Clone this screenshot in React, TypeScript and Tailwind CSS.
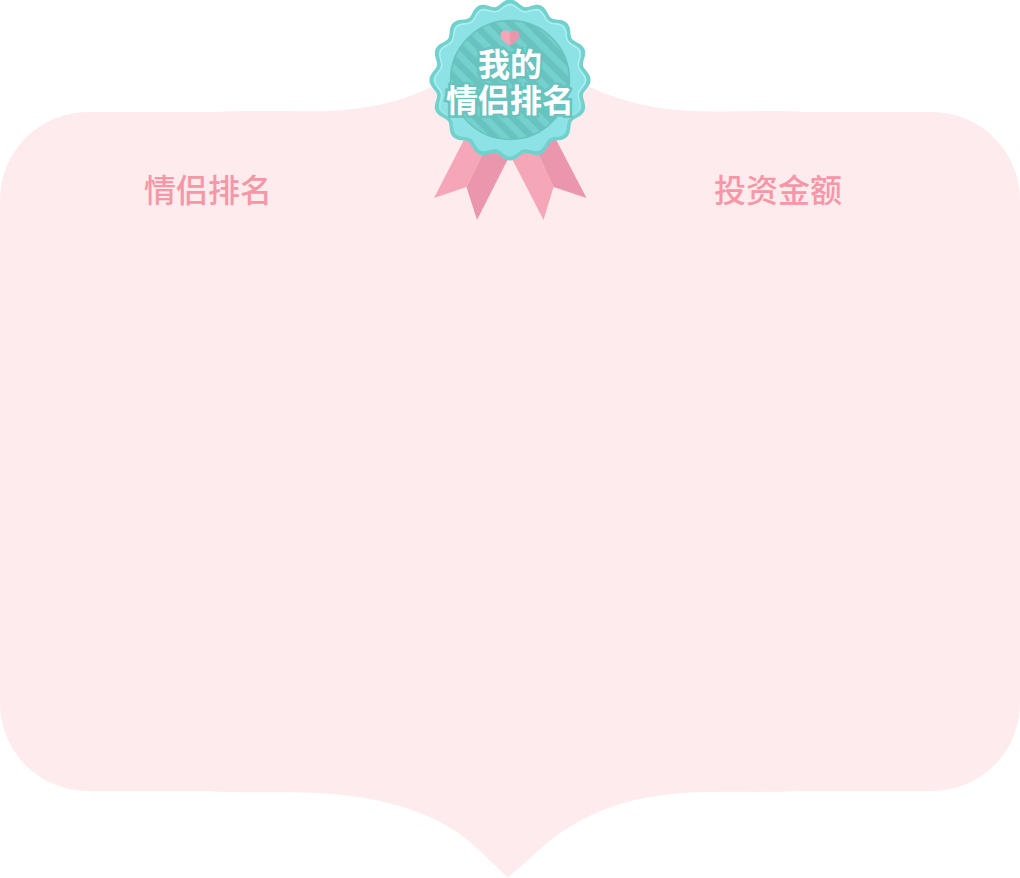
import React from "react";

const CX = 80;
const CY = 80;

/** Closed wavy ring with 16 scallops, used for the rosette's edge. */
function scallop(radius: number, depth: number): string {
  const steps = 384;
  const points: string[] = [];
  for (let i = 0; i < steps; i++) {
    const t = (i / steps) * Math.PI * 2;
    const r = radius + depth * Math.cos(16 * t);
    points.push(`${(CX + r * Math.sin(t)).toFixed(2)} ${(CY - r * Math.cos(t)).toFixed(2)}`);
  }
  return `M${points.join("L")}Z`;
}

function Rosette() {
  return (
    <svg width="162" height="221" viewBox="-1 0 162 221" aria-hidden="true" className="block">
      <defs>
        <pattern id="stripes" width="13" height="13" patternUnits="userSpaceOnUse" patternTransform="rotate(-45 80 80)">
          <rect width="13" height="13" fill="#75d1cd" />
          <rect width="6.5" height="13" fill="#68c2be" />
        </pattern>
        <linearGradient id="shine" x1="0" y1="0" x2="0" y2="1">
          <stop offset="0" stopColor="#aaf0f0" />
          <stop offset="0.55" stopColor="#aaf0f0" />
          <stop offset="0.8" stopColor="#8ce2e5" />
        </linearGradient>
      </defs>
      <path d="M40 128L4 198L36.5 187L57 145Z" fill="#f5a6b7" />
      <path d="M57 145L36.5 187L47 220L81 153L76 140Z" fill="#ea96ad" />
      <path d="M79 153L113.5 220L123.5 187L104 145Z" fill="#f5a6b7" />
      <path d="M104 145L123.5 187L156.500 198L120 128Z" fill="#ea96ad" />
      <path d={scallop(75.5, 3.1)} fill="#8ce2e5" stroke="#73d1cd" strokeWidth="4" />
      <path d={scallop(72.6, 2.8)} fill="none" stroke="url(#shine)" strokeWidth="1.6" />
      <circle cx="80" cy="80" r="59.5" fill="url(#stripes)" stroke="#68c2be" strokeWidth="1.5" />
      <path d="M80 46C76 43 70.5 40 70.5 35.5C70.5 30 77 29 80 33Z" fill="#f5a6b7" />
      <path d="M80 46C84 43 89.5 40 89.5 35.5C89.5 30 83 29 80 33Z" fill="#ea96ad" />
    </svg>
  );
}

function Badge() {
  return (
    <div className="absolute top-0 left-1/2 -translate-x-1/2">
      <Rosette />
      <h1 className="absolute inset-x-0 top-11 text-center text-[32px] leading-9 font-bold whitespace-nowrap text-white [-webkit-text-stroke:5px_#68c2be] [paint-order:stroke_fill] [stroke-linejoin:round]">
        我的
        <br />
        情侣排名
      </h1>
    </div>
  );
}

export default function App() {
  return (
    <main className="relative flex min-h-screen flex-col bg-white font-['Noto_Sans_CJK_SC',sans-serif]">
      <svg width="590" height="112" viewBox="215 0 590 112" aria-hidden="true" className="block shrink-0 self-center">
        <path d="M215 112C260 110 300 112 330 111C370 109 404 101 433 86L510 40L588 86C620 101 655 111 710 111.5C750 111.5 780 110 805 112Z" fill="#feebed" />
      </svg>
      <section className="flex-1 rounded-[88px] bg-[#feebed] pt-13 pr-[178px] pl-36">
        <div className="flex justify-between text-[32px] leading-12 font-medium text-[#f597a7]">
          <h2>情侣排名</h2>
          <h2>投资金额</h2>
        </div>
      </section>
      <svg width="630" height="87" viewBox="195 791 630 87" aria-hidden="true" className="block shrink-0 self-center">
        <path d="M205 791C230 793 270 792 300 792.5C362 793 420 806 460 834C477 847 491 862 508 877.5C525 863 540 848 556 836C600 804 650 792 712 792C740 791.5 785 792.5 795 791Z" fill="#feebed" />
      </svg>
      <Badge />
    </main>
  );
}
